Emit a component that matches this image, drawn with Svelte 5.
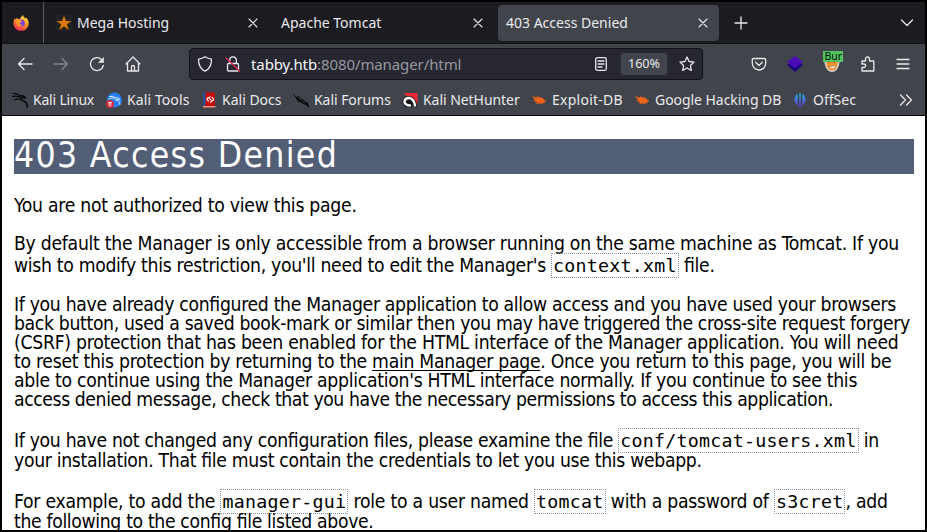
<script>
  const tabs = [
    { title: 'Mega Hosting', icon: true, active: false },
    { title: 'Apache Tomcat', icon: false, active: false },
    { title: '403 Access Denied', icon: false, active: true }
  ];
  const bookmarks = [
    { name: 'Kali Linux', icon: 'dragon', w: 94, ls: -0.2 },
    { name: 'Kali Tools', icon: 'tools', w: 95, ls: 0.1 },
    { name: 'Kali Docs', icon: 'docs', w: 92, ls: 0 },
    { name: 'Kali Forums', icon: 'forum', w: 109, ls: -0.05 },
    { name: 'Kali NetHunter', icon: 'hunter', w: 129, ls: -0.05 },
    { name: 'Exploit-DB', icon: 'bug', w: 103, ls: 0.25 },
    { name: 'Google Hacking DB', icon: 'bug', w: 158, ls: -0.05 },
    { name: 'OffSec', icon: 'offsec', w: 90, ls: 0 }
  ];
</script>

<div class="window">
  <div class="tabstrip">
    <div class="home-tab">
      <svg width="16" height="16" viewBox="0 0 16 16">
        <defs>
          <linearGradient id="fire" x1=".8" y1="0" x2=".3" y2="1">
            <stop offset="0" stop-color="#fff044" /><stop offset=".45" stop-color="#ff9626" /><stop offset="1" stop-color="#f52a5b" />
          </linearGradient>
        </defs>
        <path d="M1.8 3.2 2.6 4.6 4.5 2.6l.3 1.3 1.8.2L9 1l1-.9c.2 1.6 1.2 2.4 2.2 3.3l.4-1.2c2 1.800 3.200 3.600 3.200 6.200A7.700 7.400 0 0 1 .4 8.400c0-2 .6-3.800 1.400-5.200z" fill="url(#fire)" stroke="none" />
        <circle cx="8.300" cy="8" r="3.500" fill="#7a3fe0" stroke="none" />
        <path d="M3.300 5.500c1.500-1 3-.8 4.100.1l1.800.5c-.2 1.300-2.200 1.200-2.600 2.300-.2 1.200 1.500 2 3.200 1-1 2.600-5.400 2.400-6.200-.5z" fill="#ff9d1e" stroke="none" />
      </svg>
    </div>
    {#each tabs as tab}
      <div class="tab" class:active={tab.active}>
        {#if tab.icon}
          <svg class="favicon" width="16" height="16" viewBox="0 0 16 16"><rect width="16" height="16" fill="#212126" /><path d="M8 .5 10 6h5.500L11 9.300l1.800 5.800L8 11.600l-4.800 3.500L5 9.300.5 6H6z" fill="#d77900" /></svg>
        {/if}
        <span class="title">{tab.title}</span>
        <svg class="close" width="10" height="10" viewBox="0 0 10 10"><path d="m1 1 8 8M9 1 1 9" /></svg>
      </div>
    {/each}
    <svg class="plus" width="14" height="14" viewBox="0 0 14 14"><path d="M7 1v12M1 7h12" /></svg>
    <svg class="chevron" width="14" height="10" viewBox="0 0 14 10"><path d="m1.500 2 5.500 5.500L12.500 2" /></svg>
  </div>

  <div class="toolbar">
    <svg width="16" height="16" viewBox="0 0 16 16"><path d="M15 8H1.500M7 2.500 1.500 8 7 13.500" /></svg>
    <svg class="dim" width="16" height="16" viewBox="0 0 16 16"><path d="M1 8h13.500M9 2.500 14.500 8 9 13.500" /></svg>
    <svg width="16" height="16" viewBox="0 0 16 16"><path d="M12.800 3.700A6.500 6.500 0 1 0 14.300 9.500" /><path d="M14.500 1.800v4.700H9.800z" class="solid" stroke-width=".6" /></svg>
    <svg width="16" height="16" viewBox="0 0 16 16"><path d="m1 8 7-7 7 7M2.500 7v8h11V7M6.500 15v-4c0-2 3-2 3 0v4" /></svg>
    <div class="url">
      <svg width="16" height="16" viewBox="0 0 16 16"><path d="M8 .8c2.500 1.800 4.300 2.100 6.500 2.400 0 5.300-1 9.400-6.500 12-5.500-2.600-6.500-6.700-6.500-12C3.700 2.900 5.500 2.600 8 .8z" /></svg>
      <svg class="lock" width="16" height="16" viewBox="0 0 16 16"><path d="M3.500 7.500h9q1 0 1 1v5.500q0 1-1 1h-9q-1 0-1-1V8.500q0-1 1-1zM4.700 7.500V4.200a3.300 3.300 0 0 1 6.600 0v3.300" /><path class="slash" d="m1 2 13.500 13" /></svg>
      <span class="address"><b>tabby.htb</b>:8080/manager/html</span>
      <svg class="reader" width="14" height="16" viewBox="0 0 14 16"><rect x="1.700" y="1.700" width="10.600" height="12.600" rx="1.500" /><path d="M4 5h6M4 8h6M4 11h4" /></svg>
      <span class="zoom">160%</span>
      <svg width="16" height="16" viewBox="0 0 16 16"><path d="m8 1 2.100 4.500 4.900.6-3.600 3.400.9 4.900L8 12l-4.300 2.400.9-4.900L1 6.100l4.900-.6z" /></svg>
    </div>
    <div class="actions">
      <svg width="16" height="16" viewBox="0 0 16 16"><path d="M2.500 2.500h11q1.200 0 1.200 1.200V7.300a6.700 6.700 0 0 1-13.400 0V3.700q0-1.200 1.200-1.200zM4.700 6.300 8 9.500l3.300-3.200" /></svg>
      <svg width="18" height="18" viewBox="0 0 18 18"><path d="m9 5 8 5-8 7-8-7z" fill="#1d0780" stroke="none" /><path d="m9 1 8 6-8 6-8-6z" fill="#4b0cb8" stroke="none" /></svg>
      <div class="foxy">
        <svg width="18" height="16" viewBox="0 0 18 16"><path d="M1 4h16l-1 5q-2 7-7 7T2 9z" fill="#d6d6d8" stroke="none" /><path d="M3 1h12.500l-.8 8q-1.700 5.500-5.700 5.500T3.500 9z" fill="#ee9635" stroke="none" /><path d="m5 6.500 3-.5m2.500.5 3-1" stroke="#a85f22" stroke-width="1" /><path d="M5.500 10.500q4 1 7.500-1.500-1 3.500-3.500 3.500t-4-2z" fill="#fff" stroke="#b56a2c" stroke-width=".5" /></svg>
        <span>Bur</span>
      </div>
      <svg class="puzzle" width="16" height="16" viewBox="0 0 16 16"><path d="M2 5h3.500V3.200c0-3 4-3 4 0V5h4.300v10H2v-3.500h1.800c2.500 0 2.500-3.500 0-3.500H2z" /></svg>
      <svg width="14" height="14" viewBox="0 0 14 14"><path d="M1 2.500h12M1 7h12M1 11.500h12" /></svg>
    </div>
  </div>

  <div class="bookmarks">
    {#each bookmarks as b}
      <div class="bookmark" style:width="{b.w}px">
        <svg width="16" height="16" viewBox="0 0 16 16">
          {#if b.icon === 'dragon'}
            <path d="M1 1.500q4-.5 7 2.500M.5 4.500Q4 3.500 8 5M3 8q2-1.500 4.500-1" stroke="#08090b" stroke-width="1.200" /><path d="M8 4.200q3-1.200 5.500 1.800-3.500-1-4.500.2-1 1.500 1.500 2.300 4.500 1 4.800 6.500" stroke="#08090b" stroke-width="1.500" />
          {:else if b.icon === 'tools'}
            <circle cx="8.500" cy="8" r="7.500" fill="#267ff2" stroke="none" /><path d="M3.500 4.500q3-1 5.500 1M3 7q2.500-1.500 5.500-1 3-1.500 5.500 1.500-4-1-4.500.5 4.500.5 4.500 4.500" stroke="#d5e8ff" stroke-width="1" /><circle cx="4" cy="12" r="4" fill="#d52b38" stroke="none" /><path d="M2.500 10.500h3M3.200 10.500v3.500M4.900 10.500v3.500" stroke="#fff" stroke-width=".8" />
          {:else if b.icon === 'docs'}
            <path d="M2.200 .5h11.600v15H2.200z" fill="#ca0909" stroke="none" /><path d="M2.200 .5h2.200v13H2.200z" fill="#125aad" stroke="none" /><path d="M2.500 14.800H14" stroke="#f4e5d8" stroke-width="1" /><path d="M7.200 5.500Q4.500 7.500 7.500 9M9.300 4.800q-2.500 1 0 2.600t0 2.800M11 5.500q3.200 2 0 3.600" stroke="#fff" stroke-width="1.100" />
          {:else if b.icon === 'forum'}
            <path d="m0 1.500 4 3 2 .2 2 2.500 2.500.8 1 2 2.500.5 2 4.800-3.500-3-2-.4-2.500-2-2.500-.4L4 7.200 3 5.400z" fill="#020304" stroke="#020304" stroke-width=".7" /><path d="M.5 1.800 8 8l4 3" stroke="#777a80" stroke-width=".5" />
          {:else if b.icon === 'hunter'}
            <path d="M2 1h13.500v10l-2 3.500z" fill="#f02635" stroke="none" /><path d="M3.500 13.500h4.500q-4-2-2.500-4.500 3-2 6.500 4.500" fill="#111" stroke="#15151a" stroke-width="2.500" /><path d="M8 13.500Q2.500 13 2.500 9.500 3 5.500 7.500 6q4.500 1 5.500 7.500" stroke="#15151a" stroke-width="4" /><path d="M8 13.500Q2.500 13 2.500 9.500 3 5.500 7.500 6q4.500 1 5.500 7.500" stroke="#fff" stroke-width="2.400" />
          {:else if b.icon === 'bug'}
            <path d="m2 4.500 3.500 1.500 1-1.500 1.500 1.200c2.500-.5 4 .6 5 2.300l2 1-2 .5.5 1.500-2-.5-.8 1.500-1.500-1-3.500.8 1-1.600-3-.5 1.800-1L2.500 8l1.700-.3z" fill="#f26318" stroke="#f26318" stroke-width=".5" />
          {:else}
            <defs><linearGradient id="os" x1="0" y1="0" x2="0" y2="16" gradientUnits="userSpaceOnUse"><stop stop-color="#1fb0cc" /><stop offset="1" stop-color="#6532d8" /></linearGradient></defs>
            <path d="M5.800 1.200v12.600A7.500 7.500 0 0 1 5.800 1.200zM7.200 1h1.600v15H7.200zM10.200 1.200a7.500 7.500 0 0 1 0 12.600z" fill="url(#os)" stroke="none" />
          {/if}
        </svg>
        <span style:letter-spacing="{b.ls}px">{b.name}</span>
      </div>
    {/each}
    <svg class="more" width="14" height="12" viewBox="0 0 14 12"><path d="m1.500 1 5 5-5 5M7.500 1l5 5-5 5" /></svg>
  </div>

  <main>
    <h1>403 Access Denied</h1>
    <p class="p1"><span class="b">You are not authorized to view this page.</span></p>
    <p class="p2">
      <span class="b">By default the Manager is only accessible from a browser running on the same machine as Tomcat. If you</span>
      <span class="spaced f">wish to modify this restriction, you'll need to edit the Manager's <code>context.xml</code> file.</span>
    </p>
    <p class="p3">
      <span class="d">If you have already configured the Manager application to allow access and you have used your browsers</span>
      <span class="g">back button, used a saved book-mark or similar then you may have triggered the cross-site request forgery</span>
      <span class="b">(CSRF) protection that has been enabled for the HTML interface of the Manager application. You will need</span>
      <span class="c">to reset this protection by returning to the <a href="#main">main Manager page</a>. Once you return to this page, you will be</span>
      <span class="c">able to continue using the Manager application's HTML interface normally. If you continue to see this</span>
      <span class="e">access denied message, check that you have the necessary permissions to access this application.</span>
    </p>
    <p class="p4">
      <span class="d">If you have not changed any configuration files, please examine the file <code>conf/tomcat-users.xml</code> in</span>
      <span class="d">your installation. That file must contain the credentials to let you use this webapp.</span>
    </p>
    <p class="p5">
      <span class="a">For example, to add the <code>manager-gui</code> role to a user named <code>tomcat</code> with a password of <code>s3cret</code>, add</span>
      <span class="g">the following to the config file listed above.</span>
    </p>
  </main>
</div>

<style>
  :global(body) { background: #000; overflow: hidden; }
  .window { box-sizing: border-box; width: 927px; height: 532px; border: 2px solid #000; background: #fff; overflow: hidden; font-family: 'Noto Sans', sans-serif; color: #e9e9ec; }
  svg { display: block; flex: none; fill: none; stroke: #e8e8ec; stroke-width: 1.3; stroke-linecap: round; stroke-linejoin: round; }
  .tabstrip { box-sizing: border-box; display: flex; height: 42px; background: #1b1b20; border-bottom: 1px solid #111216; align-items: center; font-size: 14px; }
  .home-tab { box-sizing: border-box; width: 42px; height: 41px; border-right: 1px solid #5b5b62; display: flex; align-items: center; padding-left: 11px; }
  .tab { box-sizing: border-box; width: 225px; height: 36px; display: flex; align-items: center; padding: 0 11px 0 12px; }
  .tab.active { background: #42444b; border-radius: 4px; width: 221px; margin-left: 4px; padding: 0 11px 0 8px; }
  .favicon { margin-right: 5px; stroke: none; }
  .title { flex: 1; line-height: 20px; white-space: nowrap; }
  .close { stroke-width: 1.1; }
  .plus { margin-left: 15px; }
  .chevron { margin-left: auto; margin-right: 11px; }
  .toolbar { display: flex; height: 40px; background: #42444b; align-items: center; padding-left: 15px; gap: 20px; }
  .dim { opacity: .4; }
  .solid { fill: #e8e8ec; }
  .url { box-sizing: border-box; width: 514px; height: 32px; margin-left: 28px; border: 1px solid #111319; background: #262731; border-radius: 4px; display: flex; align-items: center; padding: 0 7px; font-size: 15px; }
  .lock { margin-left: 12px; }
  .slash { stroke: #e22850; }
  .address { margin-left: 10px; color: #98989f; flex: 1; line-height: 22px; letter-spacing: -.1px; }
  b { font-weight: 400; color: #f4f4f7; }
  .reader { margin-right: 13px; }
  .zoom { width: 46px; height: 22px; line-height: 22px; text-align: center; border-radius: 3px; background: #42444e; font-size: 12.600px; margin-right: 12px; }
  .actions { flex: 1; display: flex; align-items: center; justify-content: space-between; margin-left: 28px; margin-right: 15px; }
  .foxy { position: relative; margin: 0 1px 0 -1px; }
  .foxy span { position: absolute; left: 0; top: -5px; width: 20px; height: 11px; background: #55c262; color: #071008; font: 10.500px/11px 'Noto Sans', sans-serif; padding-left: 2px; box-sizing: border-box; }
  .puzzle { margin: 0 1px 0 -1px; }
  .bookmarks { box-sizing: border-box; height: 32px; display: flex; align-items: center; background: #42444b; border-bottom: 1px solid #050507; padding-left: 10px; font-size: 14px; }
  .bookmark { display: flex; flex: none; gap: 5px; align-items: center; line-height: 20px; white-space: nowrap; }
  .more { margin-left: auto; margin-right: 12px; }
  main { padding: 23px 11px 0 12px; color: #000; font: 19.2px/19px 'DejaVu Sans Condensed', 'DejaVu Sans', sans-serif; font-stretch: condensed; font-feature-settings: 'liga' 1; }
  h1 { margin: 0; height: 35px; background: #525d76; color: #fff; font-size: 35.2px; line-height: 32px; font-weight: 400; font-stretch: condensed; letter-spacing: 1.35px; white-space: nowrap; }
  p { margin: 0; }
  p > span { display: block; height: 19px; white-space: nowrap; }
  .a { letter-spacing: -.24px; }
  .b { letter-spacing: -.265px; }
  .c { letter-spacing: -.28px; }
  .d { letter-spacing: -.315px; }
  .e { letter-spacing: -.405px; }
  .f { letter-spacing: -.305px; }
  .g { letter-spacing: -.34px; }
  .p1 { margin-top: 22px; }
  .p2 { margin-top: 19px; }
  .p2 .spaced { margin-top: 3px; }
  .p3 { margin-top: 20px; }
  .p4 { margin-top: 22px; }
  .p4 span + span { margin-top: 1px; }
  .p5 { margin-top: 22px; }
  .p5 span + span { margin-top: 1px; }
  a { color: #000; text-decoration: underline; text-underline-offset: 2px; text-decoration-skip-ink: none; }
  code { font: 18.300px/19px 'DejaVu Sans Mono', monospace; letter-spacing: .25px; border: 1px dotted #8990a2; padding: 1px; }
</style>
